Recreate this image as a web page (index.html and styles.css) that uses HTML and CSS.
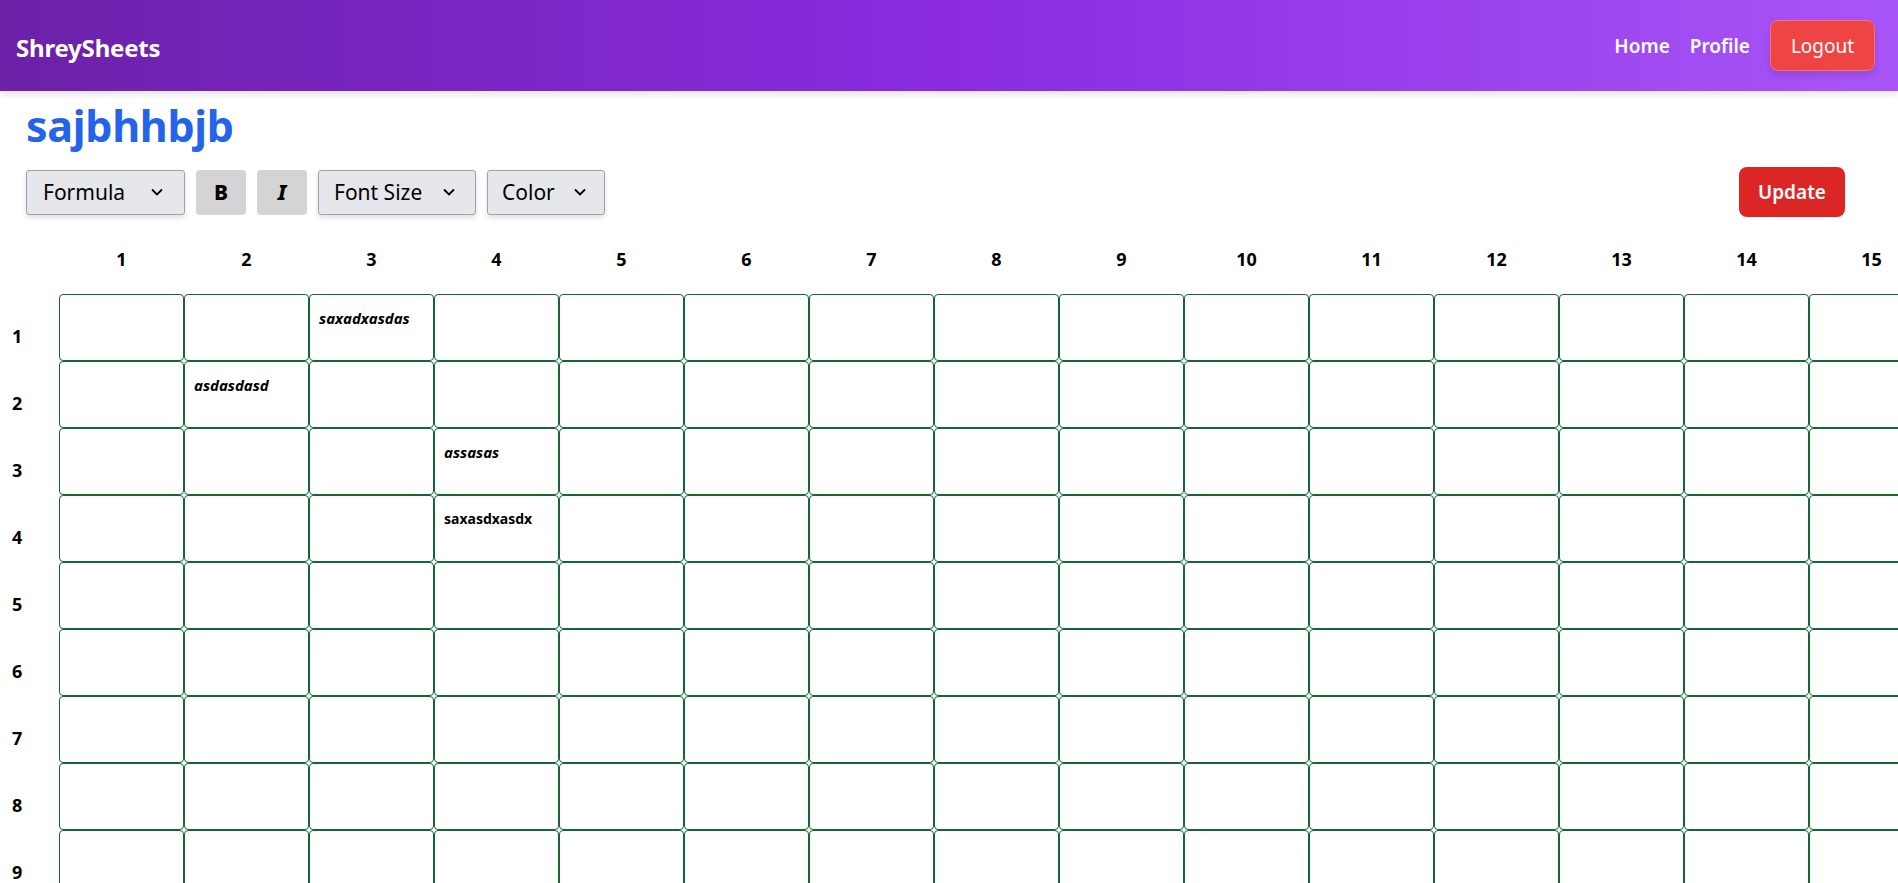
FILE: index.html
```html
<!DOCTYPE html>
<html lang="en">
<head>
<meta charset="utf-8">
<title>ShreySheets</title>
<link rel="stylesheet" href="styles.css">
</head>
<body>
<header class="topbar">
  <div class="brand">ShreySheets</div>
  <nav class="nav">
    <a class="nav-link" href="#">Home</a>
    <a class="nav-link" href="#">Profile</a>
    <button class="btn-logout">Logout</button>
  </nav>
</header>

<main class="doc">
  <section class="doc-head">
    <h1 class="doc-title">sajbhhbjb</h1>
    <div class="toolbar">
      <div class="tools">
        <button class="dropdown dropdown-formula">Formula <svg class="chev" width="12" height="8" viewBox="0 0 12 8"><path d="M1 1.5l5 5 5-5" fill="none" stroke="#000" stroke-width="1.8"/></svg></button>
        <button class="toggle toggle-bold">B</button>
        <button class="toggle toggle-italic">I</button>
        <button class="dropdown dropdown-size">Font Size <svg class="chev" width="12" height="8" viewBox="0 0 12 8"><path d="M1 1.5l5 5 5-5" fill="none" stroke="#000" stroke-width="1.8"/></svg></button>
        <button class="dropdown dropdown-color">Color <svg class="chev" width="12" height="8" viewBox="0 0 12 8"><path d="M1 1.5l5 5 5-5" fill="none" stroke="#000" stroke-width="1.8"/></svg></button>
      </div>
      <button class="btn-update">Update</button>
    </div>
  </section>

  <section class="sheet" id="sheet"></section>
</main>

<script src="app.js"></script>
</body>
</html>
```

FILE: app.js
```js
(function () {
  var sheet = document.getElementById('sheet');
  var cols = 15, rows = 10;
  var data = {
    '1-3': { t: 'saxadxasdas', i: true },
    '2-2': { t: 'asdasdasd', i: true },
    '3-4': { t: 'assasas', i: true },
    '4-4': { t: 'saxasdxasdx', i: false }
  };
  var html = '<div class="corner"></div>';
  for (var c = 1; c <= cols; c++) html += '<div class="col-head">' + c + '</div>';
  for (var r = 1; r <= rows; r++) {
    html += '<div class="row-head">' + r + '</div>';
    for (var c2 = 1; c2 <= cols; c2++) {
      var d = data[r + '-' + c2];
      if (d) {
        html += '<div class="cell"><span class="cell-text' + (d.i ? ' cell-italic' : '') + '">' + d.t + '</span></div>';
      } else {
        html += '<div class="cell"></div>';
      }
    }
  }
  sheet.innerHTML = html;
})();
```

FILE: styles.css
```css
html, body {
  margin: 0;
  padding: 0;
  overflow: hidden;
  background: #ffffff;
}

body {
  font-family: "Noto Sans", "Open Sans", "Liberation Sans", sans-serif;
  color: #000;
}

.topbar {
  height: 91px;
  box-sizing: border-box;
  display: flex;
  align-items: center;
  justify-content: space-between;
  padding: 0 23px 0 16px;
  background: linear-gradient(90deg, #6b21a8 0%, #8a2be0 50%, #a855f7 100%);
  box-shadow: 0 4px 6px rgba(0, 0, 0, 0.1);
  position: relative;
  z-index: 1;
}

.brand {
  color: #fff;
  font-size: 24px;
  font-weight: 700;
  padding-top: 4px;
  letter-spacing: -0.2px;
}

.nav {
  display: flex;
  align-items: center;
  gap: 20px;
}

.nav-link {
  color: #fff;
  text-decoration: none;
  font-size: 19px;
  font-weight: 600;
}

.btn-logout {
  height: 51px;
  width: 105px;
  border: 1px solid #f87171;
  border-radius: 8px;
  background: #ef4444;
  color: #fff;
  font-family: inherit;
  font-size: 19px;
  box-shadow: 0 4px 6px rgba(0, 0, 0, 0.12);
  padding: 0;
}

.doc-head {
  padding: 10px 53px 0 26px;
}

.doc-title {
  margin: 0;
  color: #2563eb;
  font-size: 43px;
  font-weight: 700;
  line-height: 50px;
  letter-spacing: -0.3px;
}

.toolbar {
  margin-top: 16px;
  display: flex;
  align-items: center;
  justify-content: space-between;
}

.tools {
  display: flex;
  align-items: center;
  gap: 11px;
}

.dropdown {
  height: 45px;
  box-sizing: border-box;
  display: flex;
  align-items: center;
  justify-content: space-between;
  padding: 0 20px 0 15px;
  background: #e5e7eb;
  border: 1px solid #9ca3af;
  border-radius: 3px;
  box-shadow: 0 3px 5px rgba(0, 0, 0, 0.12);
  font-family: inherit;
  font-size: 21px;
  color: #000;
}

.dropdown-formula {
  width: 159px;
  padding-left: 16px;
  padding-right: 21px;
}

.dropdown-size {
  width: 158px;
  padding-left: 15px;
  padding-right: 20px;
}

.dropdown-color {
  width: 118px;
  padding-left: 14px;
  padding-right: 18px;
}

.chev {
  display: block;
  flex: none;
}

.toggle {
  width: 50px;
  height: 45px;
  border: none;
  border-radius: 4px;
  background: #d4d4d4;
  font-family: inherit;
  font-size: 21px;
  font-weight: 800;
  color: #000;
  padding: 0;
}

.toggle-italic {
  font-style: italic;
}

.btn-update {
  width: 106px;
  height: 50px;
  border: none;
  border-radius: 8px;
  background: #dc2626;
  color: #fff;
  font-family: inherit;
  font-size: 19px;
  font-weight: 600;
  padding: 0;
}

.sheet {
  display: grid;
  grid-template-columns: 59px repeat(15, 125px);
  grid-auto-rows: 67px;
  grid-template-rows: 77px;
  width: max-content;
}

.corner {
  height: 77px;
}

.col-head {
  display: flex;
  align-items: center;
  justify-content: center;
  padding-top: 6px;
  box-sizing: border-box;
  font-size: 18px;
  font-weight: 700;
}

.row-head {
  padding: 30px 0 0 12px;
  font-size: 18px;
  font-weight: 700;
  line-height: 24px;
}

.cell {
  box-sizing: border-box;
  border: 1px solid #166534;
  border-radius: 4px;
  padding: 13px 9px;
  background: #fff;
}

.cell-text {
  display: block;
  font-size: 14px;
  font-weight: 700;
  line-height: 20px;
}

.cell-italic {
  font-style: italic;
  font-size: 15px;
}
```
